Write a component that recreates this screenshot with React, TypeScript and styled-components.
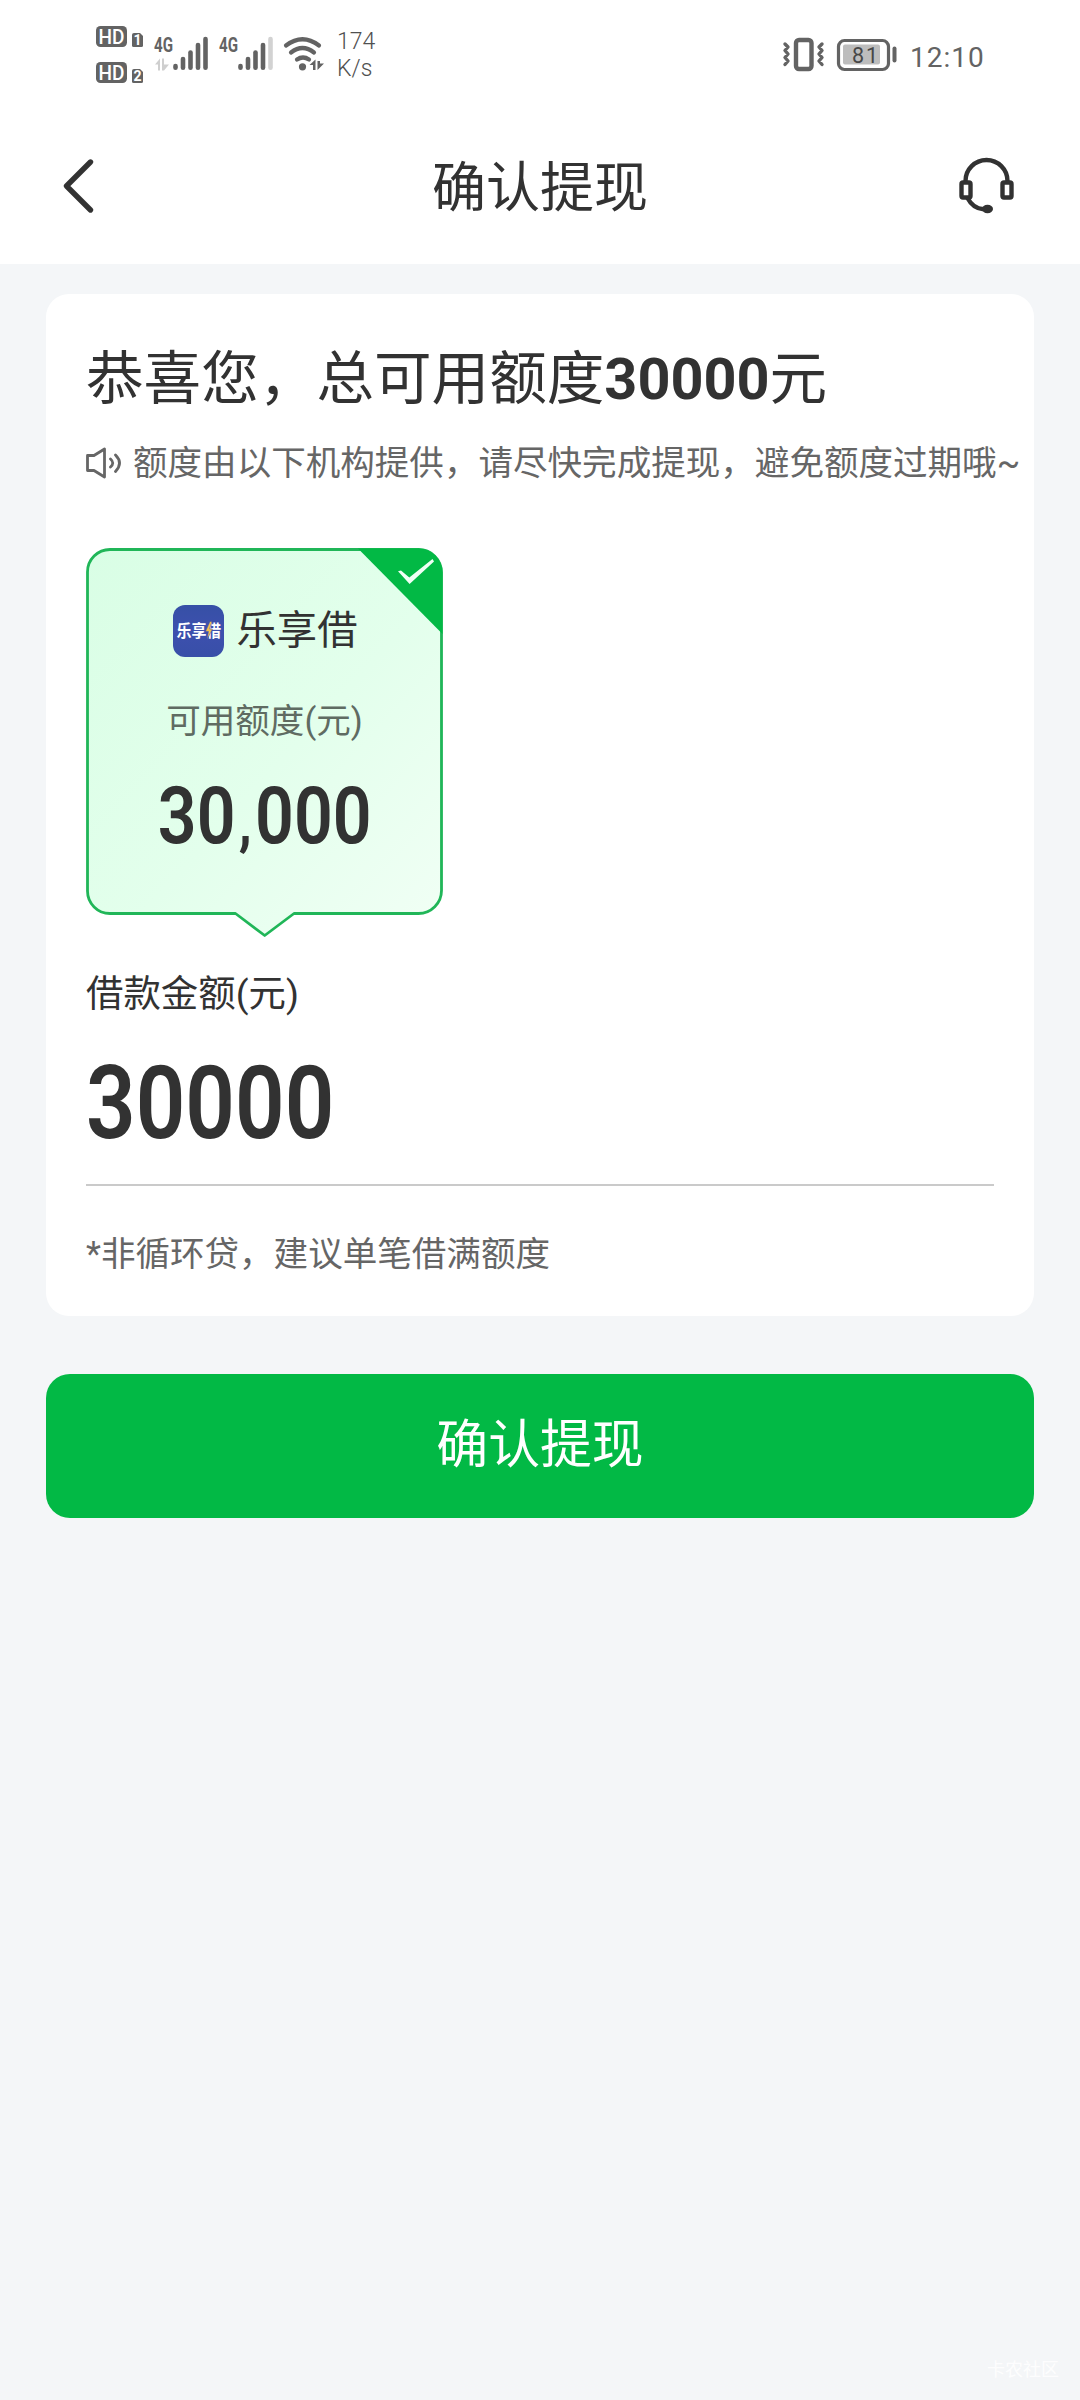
import React from 'react';
import styled, { createGlobalStyle } from 'styled-components';

const INK = '#323232';
const MUTED = '#666666';
const STATUS = '#636363';
const GREEN = '#02b945';

const GlobalStyle = createGlobalStyle`
  * { box-sizing: border-box; }
  body {
    margin: 0;
    background: #f4f6f8;
    color: ${INK};
    font-family: Roboto, "Noto Sans CJK SC", sans-serif;
  }
`;

const Page = styled.div`
  display: flex;
  flex-direction: column;
  width: 1080px;
  height: 2400px;
  overflow: hidden;
  background: #f4f6f8;
`;

const StatusBar = styled.div`
  display: flex;
  align-items: flex-start;
  height: 108px;
  padding: 20px 96px 0 94px;
  background: #fff;
  color: ${STATUS};
  svg { display: block; flex: none; }
`;

const StatusGroup = styled.div<{ $gap: number }>`
  display: flex;
  gap: ${(p) => p.$gap}px;
`;

const Speed = styled.div`
  margin: 8px 0 0 9px;
  font-size: 23px;
  line-height: 27px;
  font-weight: 300;
  color: #505050;
`;

const Spacer = styled.div`
  flex: 1;
`;

const Clock = styled.div`
  margin: 21px 0 0 6px;
  width: 74px;
  font-size: 28px;
  line-height: 34px;
  letter-spacing: 1px;
  white-space: nowrap;
`;

const Header = styled.header`
  display: grid;
  grid-template-columns: 56px 1fr 56px;
  align-items: center;
  height: 156px;
  padding: 0 66px 0 62px;
  background: #fff;
  svg { display: block; }
`;

const Title = styled.h1`
  margin: 6px 0 0 4px;
  text-align: center;
  font-size: 54px;
  line-height: 80px;
  font-weight: 400;
`;

const Content = styled.main`
  display: flex;
  flex-direction: column;
  flex: 1;
  padding: 30px 46px 0;
`;

const Card = styled.section`
  display: flex;
  flex-direction: column;
  height: 1022px;
  padding: 46px 40px 0;
  border-radius: 23px;
  background: #fff;
`;

const Headline = styled.h2`
  margin: 0;
  font-size: 57.6px;
  line-height: 80px;
  font-weight: 400;
  white-space: nowrap;
`;

const Notice = styled.div`
  display: flex;
  align-items: center;
  gap: 11px;
  height: 50px;
  margin-top: 18px;
  font-size: 34.56px;
  line-height: 50px;
  color: ${MUTED};
  white-space: nowrap;
  svg { flex: none; }
`;

const Offer = styled.div`
  position: relative;
  display: flex;
  flex-direction: column;
  align-items: center;
  width: 357px;
  height: 390px;
  margin-top: 60px;
  padding-top: 53px;
`;

const OfferShape = styled.svg`
  position: absolute;
  inset: 0;
`;

const Lender = styled.div`
  position: relative;
  display: flex;
  align-items: center;
  gap: 13px;
  height: 60px;
  padding-left: 1px;
  font-size: 40.32px;
  line-height: 60px;
`;

const LenderLogo = styled.div`
  display: flex;
  align-items: center;
  justify-content: center;
  width: 51px;
  height: 52px;
  border-radius: 12px;
  background: linear-gradient(180deg, #3650a6, #3d50ae 50%, #384fa8);
`;

const QuotaLabel = styled.div`
  position: relative;
  margin-top: 35px;
  font-size: 34.56px;
  line-height: 50px;
  color: #5f6b62;
`;

const Digits = styled.div<{ $size: number; $stretch: number; $origin: string }>`
  position: relative;
  font-size: ${(p) => p.$size}px;
  line-height: 1;
  font-weight: 600;
  white-space: nowrap;
  transform: scaleX(${(p) => p.$stretch});
  transform-origin: ${(p) => p.$origin} center;
`;

const Separator = styled.span`
  display: inline-block;
  width: 23px;
  text-align: center;
  font-size: 62px;
  line-height: 1;
  font-weight: 700;
`;

const Quota = styled.div`
  margin-top: 30px;
`;

const AmountLabel = styled.div`
  margin-top: 28px;
  font-size: 37.44px;
  line-height: 56px;
`;

const Amount = styled.div`
  height: 164px;
  padding-top: 30px;
  border-bottom: 2px solid #cacaca;
`;

const Footnote = styled.p`
  margin: 43px 0 0;
  font-size: 34.56px;
  line-height: 50px;
  color: ${MUTED};
`;

const ConfirmButton = styled.button`
  height: 144px;
  margin-top: 58px;
  padding: 0;
  border: 0;
  border-radius: 24px;
  background: ${GREEN};
  color: #fff;
  font-family: inherit;
  font-size: 51.84px;
  line-height: 76px;
`;

const Watermark = styled.div`
  align-self: flex-end;
  margin: 0 21px 17px 0;
  font-size: 18px;
  line-height: 26px;
  color: rgba(255, 255, 255, 0.9);
`;

const HdBadges = () => (
  <svg width="54" height="70" viewBox="94 20 54 70">
    {[26, 62].map((y, i) => (
      <g key={y}>
        <rect x="96" y={y} width="31" height="21" rx="4.500" fill={STATUS} />
        <text x="98.500" y={y + 17.500} fontSize="20" fontWeight="500" fill="#fff" textLength="26" lengthAdjust="spacingAndGlyphs">HD</text>
        <path d={`M134 ${y + 7}h6l3 3v9.500a1.500 1.500 0 0 1-1.500 1.500h-8a1.500 1.500 0 0 1-1.500-1.500v-10.500a2 2 0 0 1 2-2z`} fill={STATUS} />
        <text x="137.500" y={y + 19} fontSize="14" fontWeight="700" fill="#fff" textAnchor="middle">{i + 1}</text>
      </g>
    ))}
  </svg>
);

const SignalBars = ({ x, level, data }: { x: number; level: number; data?: boolean }) => (
  <svg width="65" height="70" viewBox={`${x - 6} 20 65 70`}>
    <text x={x} y="51.500" fontSize="21" fontWeight="700" fill={STATUS} textLength="19" lengthAdjust="spacingAndGlyphs">4G</text>
    {[66, 59, 52.5, 45, 39].map((top, i) => (
      <path
        key={top}
        d={`M${x + 21.5 + i * 7.5} ${top}V67.800`}
        stroke={i < level ? STATUS : '#d2d2d2'}
        strokeWidth="4.600"
        strokeLinecap="round"
      />
    ))}
    {data && <path d={`M${x + 1} 64.500l5-6v12h-2v-6zM${x + 8} 58.500h2v6h5l-5 6h-2z`} fill="#cfcfcf" />}
  </svg>
);

const WifiIcon = () => (
  <svg width="50" height="70" viewBox="278 20 50 70" fill="none" stroke={STATUS} strokeWidth="4.200" strokeLinecap="round">
    <path d="M286 45.500q16.500-12.500 33 0M291 52.500q11.500-9 23 0M297 59.500q6-4 12 0" />
    <circle cx="302.500" cy="66.800" r="3.600" fill={STATUS} stroke="none" />
    <path d="M309.500 65l6-5.500v10.500h-2.500v-5zM317.500 61h2.500v2.500h4l-6.500 6.500z" fill={STATUS} stroke="none" />
  </svg>
);

const VibrateIcon = () => (
  <svg width="50" height="70" viewBox="780 20 50 70" fill="none" stroke={STATUS} strokeLinecap="round" strokeLinejoin="round">
    <rect x="796" y="40" width="15.500" height="29" rx="3" strokeWidth="4.400" />
    <path d="M785 44l3 3-3 3.500 3 3.500-3 3.500 3 3.500-3 3.500M822 44l-3 3 3 3.500-3 3.500 3 3.500-3 3.500 3 3.500" strokeWidth="3.400" />
  </svg>
);

const BatteryIcon = () => (
  <svg width="72" height="70" viewBox="832 20 72 70">
    <rect x="838.500" y="40.500" width="50" height="29" rx="6" fill="none" stroke={STATUS} strokeWidth="3.200" />
    <rect x="843" y="44.500" width="37" height="20" rx="2" fill="#bdbdbd" />
    <path d="M894.500 48.500v12" stroke={STATUS} strokeWidth="4" strokeLinecap="round" />
    <text x="852" y="63" fontSize="21.500" fill="#474747" letterSpacing="1.800">81</text>
  </svg>
);

const BackIcon = () => (
  <svg width="36" height="60" viewBox="62 156 36 60" fill="none">
    <path d="M90.500 162L66.500 186 90.500 210" stroke={INK} strokeWidth="5.400" strokeLinecap="round" strokeLinejoin="round" />
  </svg>
);

const HeadsetIcon = () => (
  <svg width="56" height="60" viewBox="958 156 56 60" fill="none" stroke={INK} strokeWidth="4.400">
    <path d="M965.500 182V181a21 21 0 0 1 42 0v1" />
    <rect x="961.500" y="182.500" width="9" height="15" rx="1.500" />
    <rect x="1002.500" y="182.500" width="9" height="15" rx="1.500" />
    <path d="M967.500 198q5.500 10.500 16 11.300" />
    <ellipse cx="987.500" cy="209" rx="5.500" ry="4.200" fill={INK} stroke="none" />
  </svg>
);

const SpeakerIcon = () => (
  <svg width="36" height="34" viewBox="86 446 36 34" fill="none" stroke={MUTED} strokeWidth="2.800" strokeLinecap="round" strokeLinejoin="round">
    <path d="M87.500 455.500h6.500l10.500-6.500v28l-10.500-6.500h-6.500z" />
    <path d="M110.500 459q4.500 4 0 8M115.500 455q8 8 0 16.500" />
  </svg>
);

const OfferOutline = () => (
  <OfferShape width="357" height="390" viewBox="0 0 357 390">
    <defs>
      <linearGradient id="offer-fill" x1="0" y1="0" x2="1" y2="1">
        <stop offset="0" stopColor="#d9fee5" />
        <stop offset="0.550" stopColor="#e3ffec" />
        <stop offset="1" stopColor="#f1fff5" />
      </linearGradient>
    </defs>
    <path
      d="M24 1.500H332.500A23 23 0 0 1 355.500 24.500V342.500A23 23 0 0 1 332.500 365.500H208L178.700 387.500L149.500 365.500H24A22.500 22.500 0 0 1 1.500 343V24A22.500 22.500 0 0 1 24 1.500Z"
      fill="url(#offer-fill)"
      stroke="#20b658"
      strokeWidth="2.800"
      strokeLinejoin="round"
    />
    <path d="M272 0.500H332.500A24 24 0 0 1 356.500 24.500V86Z" fill={GREEN} />
    <path d="M312 23.200L315 22.500L323.300 29.500L346.500 11L348 13.500L323.600 36Z" fill="#f0fff5" />
  </OfferShape>
);

const LogoMark = () => (
  <svg width="47" height="24" viewBox="0 0 47 24">
    <text x="1.500" y="18" fontSize="16.500" fontWeight="700" fill="#fff" textLength="30" lengthAdjust="spacingAndGlyphs">乐享</text>
    <text x="32" y="18" fontSize="16.500" fontWeight="700" fill="#fff" textLength="14" lengthAdjust="spacingAndGlyphs">借</text>
    <path d="M35 2.500l-4.500 10h3l-1.500 8 5.500-10.500h-3l2.500-7.500z" fill="#f6c04c" stroke="#3d50ae" strokeWidth="0.500" />
  </svg>
);

export default function App() {
  return (
    <Page lang="zh-CN">
      <GlobalStyle />
      <StatusBar>
        <StatusGroup $gap={0}>
          <HdBadges />
          <SignalBars x={154} level={5} data />
          <SignalBars x={219} level={4} />
          <WifiIcon />
          <Speed>174<br />K/s</Speed>
        </StatusGroup>
        <Spacer />
        <StatusGroup $gap={2}>
          <VibrateIcon />
          <BatteryIcon />
        </StatusGroup>
        <Clock>12:10</Clock>
      </StatusBar>
      <Header>
        <BackIcon />
        <Title>确认提现</Title>
        <HeadsetIcon />
      </Header>
      <Content>
        <Card>
          <Headline>恭喜您，总可用额度<b>30000</b>元</Headline>
          <Notice>
            <SpeakerIcon />
            额度由以下机构提供，请尽快完成提现，避免额度过期哦~
          </Notice>
          <Offer>
            <OfferOutline />
            <Lender>
              <LenderLogo><LogoMark /></LenderLogo>
              乐享借
            </Lender>
            <QuotaLabel>可用额度(元)</QuotaLabel>
            <Quota>
              <Digits $size={80} $stretch={0.85} $origin="center">30<Separator>,</Separator>000</Digits>
            </Quota>
          </Offer>
          <AmountLabel>借款金额(元)</AmountLabel>
          <Amount>
            <Digits $size={102.5} $stretch={0.848} $origin="left">30000</Digits>
          </Amount>
          <Footnote>*非循环贷，建议单笔借满额度</Footnote>
        </Card>
        <ConfirmButton>确认提现</ConfirmButton>
      </Content>
      <Watermark>卡农社区</Watermark>
    </Page>
  );
}
